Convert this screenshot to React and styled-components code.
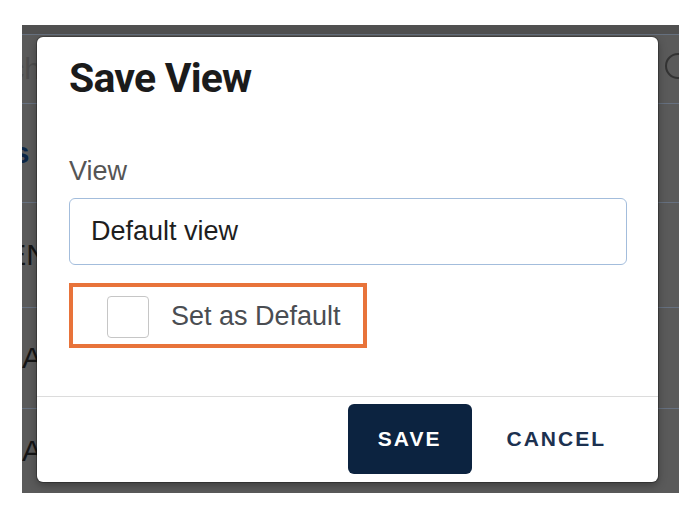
import React, { useState } from "react";
import styled, { createGlobalStyle } from "styled-components";

const GlobalStyles = createGlobalStyle`
  html, body {
    margin: 0;
    padding: 0;
    background: #fff;
  }
  body {
    font-family: "Liberation Sans", Arial, sans-serif;
  }
`;

const Frame = styled.div`
  margin: 25px 0 0 22px;
  width: 657px;
  height: 468px;
  display: grid;
  overflow: hidden;
`;

// the page behind the dialog, already dimmed
const Page = styled.div`
  grid-area: 1 / 1;
  display: flex;
  flex-direction: column;
  background: #5a5a5a;
`;

const TopStrip = styled.div`
  height: 10px;
  box-sizing: border-box;
  background: #505050;
  border-bottom: 1px solid #66707e;
`;

const Row = styled.div`
  flex: ${(props) => (props.$fill ? 1 : "none")};
  height: ${(props) => (props.$h ? `${props.$h}px` : "auto")};
  box-sizing: border-box;
  display: flex;
  align-items: center;
  justify-content: space-between;
  border-bottom: ${(props) => (props.$fill ? "none" : "1px solid #66707f")};
`;

const RowText = styled.span`
  font-size: 30px;
  white-space: nowrap;
  text-indent: ${(props) => props.$indent || 0}px;
  color: ${(props) => props.$color || "#151515"};
  font-weight: ${(props) => (props.$bold ? 700 : 400)};
`;

const Avatar = styled.span`
  width: 22px;
  height: 22px;
  flex: none;
  border: 2px solid #333;
  border-radius: 50%;
  margin-right: -12px;
  margin-top: -6px;
`;

const Backdrop = styled.div`
  grid-area: 1 / 1;
  display: flex;
  padding: 12px 21px 11px 15px;
`;

const Dialog = styled.div`
  flex: 1;
  display: flex;
  flex-direction: column;
  background: #fff;
  border-radius: 6px;
  overflow: hidden;
  box-shadow: 0 0 0 1px rgba(0, 0, 0, 0.25), 0 3px 8px rgba(0, 0, 0, 0.35);
`;

const Body = styled.div`
  flex: 1;
  display: flex;
  flex-direction: column;
  align-items: flex-start;
  padding: 17px 31px 0 32px;
`;

const Title = styled.h2`
  margin: 0;
  font-family: Roboto, "Liberation Sans", sans-serif;
  font-weight: 700;
  font-size: 41px;
  line-height: 48px;
  letter-spacing: -0.8px;
  color: #1b1b1b;
`;

const FieldLabel = styled.label`
  margin-top: 54px;
  font-size: 27px;
  line-height: 30px;
  color: #555;
`;

const TextInput = styled.input`
  align-self: stretch;
  margin-top: 12px;
  height: 67px;
  box-sizing: border-box;
  border: 1.5px solid #a3bddc;
  border-radius: 6px;
  padding: 0 21px;
  font-family: "Liberation Sans", Arial, sans-serif;
  font-size: 27px;
  color: #1e1e1e;
  background: #fff;
  outline: none;
`;

const DefaultToggle = styled.label`
  margin-top: 18px;
  height: 65px;
  box-sizing: border-box;
  display: inline-flex;
  align-items: center;
  gap: 22px;
  padding: 2px 22px 0 34px;
  border: 4px solid #e8733a;
  font-size: 27px;
  color: #4a4d52;
  cursor: pointer;
`;

const Box = styled.input`
  appearance: none;
  margin: 0;
  width: 42px;
  height: 42px;
  box-sizing: border-box;
  border: 1.5px solid #c6c6c6;
  border-radius: 4px;
  background: ${(props) => (props.checked ? "#0c2340" : "#fff")};
  cursor: pointer;
`;

const Footer = styled.div`
  display: flex;
  justify-content: flex-end;
  gap: 11px;
  padding: 7px 28px 8px;
  border-top: 1px solid #dcdcdc;
`;

const Button = styled.button`
  height: 70px;
  border: none;
  border-radius: 6px;
  padding: ${(props) => (props.$primary ? "0 30px" : "0 24px")};
  background: ${(props) => (props.$primary ? "#0c2340" : "transparent")};
  color: ${(props) => (props.$primary ? "#fff" : "#1c3150")};
  font-family: "Liberation Sans", Arial, sans-serif;
  font-weight: 700;
  font-size: 21px;
  letter-spacing: 2px;
  text-transform: uppercase;
  cursor: pointer;
`;

function BackgroundPage() {
  return (
    <Page>
      <TopStrip />
      <Row $h={69}>
        <RowText $indent={-76} $color="#4c4c4c">
          Search
        </RowText>
        <Avatar />
      </Row>
      <Row $h={99}>
        <RowText $indent={-77} $color="#0b2545" $bold>
          Views
        </RowText>
      </Row>
      <Row $h={105}>
        <RowText $indent={-59}>OPEN</RowText>
      </Row>
      <Row $h={101}>
        <RowText>Active</RowText>
      </Row>
      <Row $fill>
        <RowText>Active</RowText>
      </Row>
    </Page>
  );
}

export default function App() {
  const [name, setName] = useState("Default view");
  const [isDefault, setIsDefault] = useState(false);

  return (
    <>
      <GlobalStyles />
      <Frame>
        <BackgroundPage />
        <Backdrop>
          <Dialog role="dialog" aria-labelledby="save-view-title">
            <Body>
              <Title id="save-view-title">Save View</Title>
              <FieldLabel htmlFor="view-name">View</FieldLabel>
              <TextInput
                id="view-name"
                value={name}
                onChange={(e) => setName(e.target.value)}
              />
              <DefaultToggle>
                <Box
                  type="checkbox"
                  checked={isDefault}
                  onChange={(e) => setIsDefault(e.target.checked)}
                />
                Set as Default
              </DefaultToggle>
            </Body>
            <Footer>
              <Button $primary>Save</Button>
              <Button>Cancel</Button>
            </Footer>
          </Dialog>
        </Backdrop>
      </Frame>
    </>
  );
}
